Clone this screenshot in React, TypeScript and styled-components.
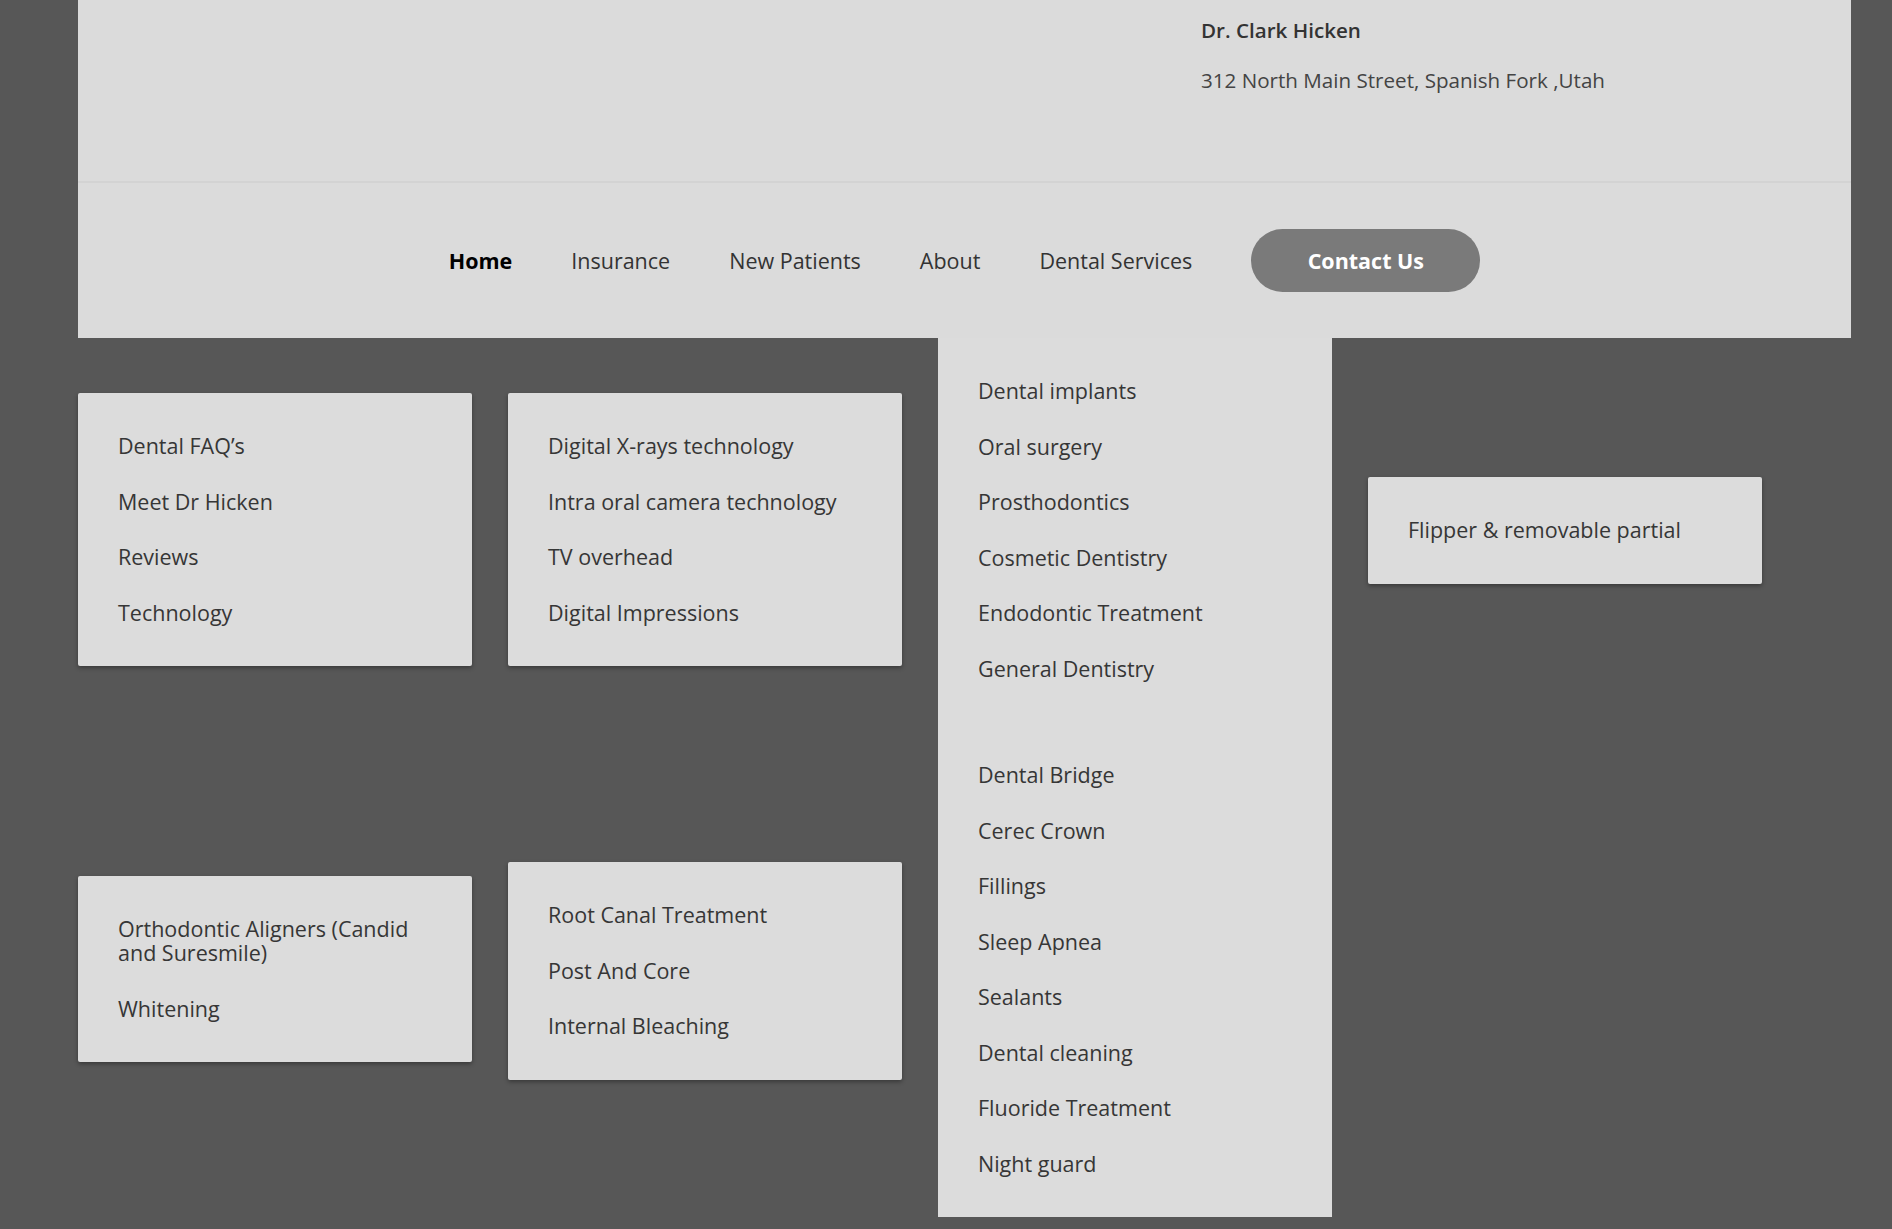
import React from 'react'
import styled, { createGlobalStyle } from 'styled-components'

const GlobalStyle = createGlobalStyle`
  html, body {
    margin: 0;
    padding: 0;
    background: #575757;
  }
  body {
    font-family: 'Open Sans', 'Liberation Sans', sans-serif;
    color: #333333;
  }
`

const Page = styled.div`
  min-height: 1229px;
  padding: 0 41px 0 78px;
  box-sizing: border-box;
`

const Header = styled.header`
  background: #dbdbdb;
  display: flex;
  flex-direction: column;
`

const TopBar = styled.div`
  height: 181px;
  display: flex;
  border-bottom: 2px solid #d3d3d3;
`

const DoctorInfo = styled.div`
  margin-left: auto;
  width: 650px;
  padding-top: 18px;
  display: flex;
  flex-direction: column;
  gap: 26px;
`

const DoctorName = styled.div`
  font-size: 20.6px;
  line-height: 24px;
  font-weight: 600;
  color: #333333;
`

const Address = styled.div`
  font-size: 20.6px;
  line-height: 24px;
  color: #444444;
`

const NavBar = styled.nav`
  height: 155px;
  display: flex;
  align-items: center;
  justify-content: center;
  gap: 59px;
`

const NavLink = styled.a<{ $active?: boolean }>`
  font-size: 21.5px;
  line-height: 24px;
  color: ${({ $active }) => ($active ? '#000000' : '#333333')};
  font-weight: ${({ $active }) => ($active ? 700 : 400)};
  text-decoration: none;
  cursor: pointer;
`

const ContactButton = styled.button`
  width: 229px;
  height: 63px;
  border: none;
  border-radius: 32px;
  background: #7a7a7a;
  color: #ffffff;
  font-family: inherit;
  font-size: 21.5px;
  font-weight: 700;
  cursor: pointer;
`

const Menus = styled.div`
  display: flex;
  gap: 36px;
  align-items: flex-start;
`

const Column = styled.div<{ $top: number; $gap?: number }>`
  width: 394px;
  padding-top: ${({ $top }) => $top}px;
  display: flex;
  flex-direction: column;
  gap: ${({ $gap }) => $gap ?? 0}px;
`

const Card = styled.ul<{ $flat?: boolean }>`
  margin: 0;
  list-style: none;
  background: #dcdcdc;
  padding: 25.5px 40px;
  border-radius: ${({ $flat }) => ($flat ? '0' : '2px')};
  box-shadow: ${({ $flat }) => ($flat ? 'none' : '0 2px 4px rgba(0, 0, 0, 0.35)')};
`

const Item = styled.li`
  font-size: 21.5px;
  line-height: 24px;
  padding: 15.75px 0;
  color: #363636;
`

const MenuCard: React.FC<{ items: string[]; flat?: boolean }> = ({ items, flat }) => (
  <Card $flat={flat}>
    {items.map((item) => (
      <Item key={item}>{item}</Item>
    ))}
  </Card>
)

const navItems = ['Insurance', 'New Patients', 'About', 'Dental Services']

const App: React.FC = () => (
  <>
    <GlobalStyle />
    <Page>
      <Header>
        <TopBar>
          <DoctorInfo>
            <DoctorName>Dr. Clark Hicken</DoctorName>
            <Address>312 North Main Street, Spanish Fork ,Utah</Address>
          </DoctorInfo>
        </TopBar>
        <NavBar>
          <NavLink $active>Home</NavLink>
          {navItems.map((label) => (
            <NavLink key={label}>{label}</NavLink>
          ))}
          <ContactButton>Contact Us</ContactButton>
        </NavBar>
      </Header>
      <Menus>
        <Column $top={55} $gap={210}>
          <MenuCard items={['Dental FAQ’s', 'Meet Dr Hicken', 'Reviews', 'Technology']} />
          <MenuCard items={['Orthodontic Aligners (Candid and Suresmile)', 'Whitening']} />
        </Column>
        <Column $top={55} $gap={196}>
          <MenuCard
            items={[
              'Digital X-rays technology',
              'Intra oral camera technology',
              'TV overhead',
              'Digital Impressions',
            ]}
          />
          <MenuCard items={['Root Canal Treatment', 'Post And Core', 'Internal Bleaching']} />
        </Column>
        <Column $top={0}>
          <MenuCard
            flat
            items={[
              'Dental implants',
              'Oral surgery',
              'Prosthodontics',
              'Cosmetic Dentistry',
              'Endodontic Treatment',
              'General Dentistry',
            ]}
          />
          <MenuCard
            flat
            items={[
              'Dental Bridge',
              'Cerec Crown',
              'Fillings',
              'Sleep Apnea',
              'Sealants',
              'Dental cleaning',
              'Fluoride Treatment',
              'Night guard',
            ]}
          />
        </Column>
        <Column $top={139}>
          <MenuCard items={['Flipper & removable partial']} />
        </Column>
      </Menus>
    </Page>
  </>
)

export default App
